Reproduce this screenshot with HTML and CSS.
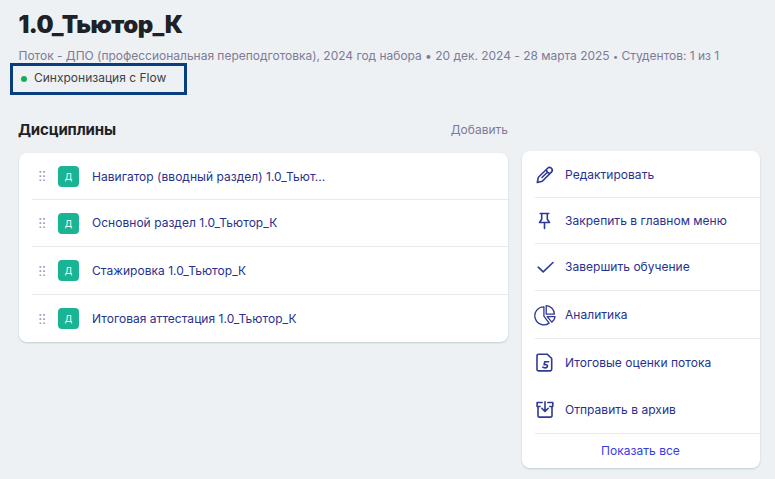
FILE: index.html
```html
<!DOCTYPE html>
<html lang="ru">
<head>
<meta charset="utf-8">
<title>1.0_Тьютор_К</title>
<link rel="stylesheet" href="styles.css">
</head>
<body>
<svg class="defs" width="0" height="0">
  <symbol id="grip" viewBox="0 0 7 12"><path d="M.5 1h1.7v1.7H.5zM4.2 1h1.7v1.7H4.2zM.5 5.2h1.7v1.7H.5zM4.2 5.2h1.7v1.7H4.2zM.5 9.4h1.7v1.7H.5zM4.2 9.4h1.7v1.7H4.2z"/></symbol>
</svg>
<header class="head">
  <h1 class="title"><span>1.0_Тьютор_К</span></h1>
  <p class="meta"><span>Поток - ДПО (профессиональная переподготовка), 2024 год набора • 20 дек. 2024 - 28 марта 2025 <small class="bullet">•</small> Студентов: 1 из 1</span></p>
  <div class="sync"><i class="dot"></i><span>Синхронизация с Flow</span></div>
</header>
<div class="columns">
  <main class="main">
    <div class="section-head"><h2 class="subtitle">Дисциплины</h2><a class="add">Добавить</a></div>
    <ul class="card list">
      <li class="row"><svg class="grip"><use href="#grip"/></svg><b class="badge">Д</b><span class="lower">Навигатор (вводный раздел) 1.0_Тьют...</span></li>
      <li class="row"><svg class="grip"><use href="#grip"/></svg><b class="badge">Д</b><span>Основной раздел 1.0_Тьютор_К</span></li>
      <li class="row tall"><svg class="grip"><use href="#grip"/></svg><b class="badge">Д</b><span>Стажировка 1.0_Тьютор_К</span></li>
      <li class="row last"><svg class="grip"><use href="#grip"/></svg><b class="badge">Д</b><span>Итоговая аттестация 1.0_Тьютор_К</span></li>
    </ul>
  </main>
  <aside class="card menu">
    <a class="item first"><svg class="icon" viewBox="0 0 22 22"><path d="M3.3 18.5l1.1-5.3 9.2-8.9a2.6 2.6 0 0 1 3.8 3.8l-9.1 9.1zM12.4 5.8c.3 2.2 1.3 3.2 3.4 3.5M8 13.5l4.6-4.5"/></svg><span>Редактировать</span></a>
    <a class="item short"><svg class="icon" viewBox="0 0 22 22"><path d="M6.2 3.5h8.6M7.7 3.5v5.8l-2.2 3.2h10l-2.2-3.2V3.5M10.5 12.5v6"/></svg><span>Закрепить в главном меню</span></a>
    <a class="item"><svg class="icon" viewBox="0 0 22 22"><path d="M4.2 11.2l5 4.7 9.8-9.4"/></svg><span>Завершить обучение</span></a>
    <a class="item tall"><svg class="icon thin" viewBox="0 0 22 22"><path d="M9.9 2.8v9.3l5.2 7A9 9 0 1 1 9.9 2.8zM12.2 1.6v8.6h8.1a8.5 8.5 0 0 0-8.1-8.6zM13.2 12.6h7.9a8.3 8.3 0 0 1-3.3 5.6z"/></svg><span>Аналитика</span></a>
    <a class="item plain"><svg class="icon" viewBox="0 0 22 22"><path d="M4.5 2.2h8.7l4.5 4.3v10.8a1.6 1.6 0 0 1-1.6 1.6H4.5a1.5 1.5 0 0 1-1.5-1.5V3.7a1.5 1.5 0 0 1 1.5-1.5z"/><path d="M14.6 9.8h-3.9l-.6 2.9c4.1-1.3 4.6 3.1.9 3.2-1.1 0-1.8-.3-2.2-.8"/></svg><span>Итоговые оценки потока</span></a>
    <a class="item tall"><svg class="icon" viewBox="0 0 22 22"><path d="M8.2 3.5H3.1v4h3M13.8 3.5h5v4h-3M4 7.5v9.6a1 1 0 0 0 1 1h12a1 1 0 0 0 1-1V7.5M11 2.8v9.4M7.8 9.3l3.2 3.1 3.2-3.1"/></svg><span>Отправить в архив</span></a>
    <a class="more"><span>Показать все</span></a>
  </aside>
</div>
</body>
</html>
```

FILE: styles.css
```css
* { box-sizing: border-box; margin: 0; padding: 0; }
body {
  width: 775px; height: 479px; overflow: hidden;
  background: #edf1f4; color: #202027;
  font: 400 12px/18px Inter, "Liberation Sans", sans-serif;
}
.defs { display: block; height: 0; }
.head { height: 96px; padding: 9px 0 0 10px; }
.title { padding-left: 8.5px; font-size: 24px; line-height: 32px; font-weight: 900; letter-spacing: -.55px; }
.meta { padding: 6px 0 0 8.5px; color: #7d7b98; line-height: 18px; letter-spacing: -.015px; white-space: nowrap; }
.bullet { font-size: 9px; line-height: 1; }
.sync {
  display: flex; align-items: center; gap: 7px;
  width: 177px; height: 32px; margin-top: -2px; padding: 0 8px 3px;
  border: 3px solid #083d80; color: #3d4045;
}
.dot { width: 6px; height: 6px; border-radius: 50%; background: #18ab58; position: relative; top: 1px; }
.columns { display: flex; align-items: flex-start; gap: 14px; padding-left: 19px; }
.main { width: 489px; }
.section-head { display: flex; justify-content: space-between; height: 57px; padding-top: 25px; }
.subtitle { margin-left: -1px; font-size: 15px; line-height: 18px; font-weight: 700; letter-spacing: -.15px; }
.add { color: #7d7b98; }
.card { background: #fff; border-radius: 8px; box-shadow: 0 1px 2px #c3cbd3; overflow: hidden; }
.list { list-style: none; padding-left: 13px; color: #28318e; letter-spacing: .03px; }
.row { display: flex; align-items: center; height: 47px; padding-left: 7px; border-bottom: 1px solid #e7e9ec; }
.lower { padding-top: 2px; }
.row.tall { height: 48px; }
.row.last { border: 0; }
.grip { width: 7px; height: 12px; margin-right: 12px; fill: #9a99bd; }
.badge { width: 21px; height: 21px; margin-right: 13px; border-radius: 4px; background: #1ab394; color: #fff; font-size: 9px; line-height: 21px; font-weight: 400; text-align: center; }
.menu { width: 238px; margin-top: 55px; padding-left: 13px; color: #28318e; letter-spacing: .03px; }
.item { display: flex; align-items: center; gap: 9px; height: 47px; border-bottom: 1px solid #e7e9ec; }
.item.first { padding-top: 2px; }
.item.short { height: 46px; }
.item.tall { height: 48px; }
.item.plain { border: 0; }
.icon { width: 22px; height: 22px; margin-left: -1px; fill: none; stroke: #313a92; stroke-width: 1.6; stroke-linecap: round; stroke-linejoin: round; }
.icon.thin { stroke-width: 1.3; }
.more { display: block; height: 34px; padding-left: 66px; line-height: 34px; color: #353ce8; }
```
